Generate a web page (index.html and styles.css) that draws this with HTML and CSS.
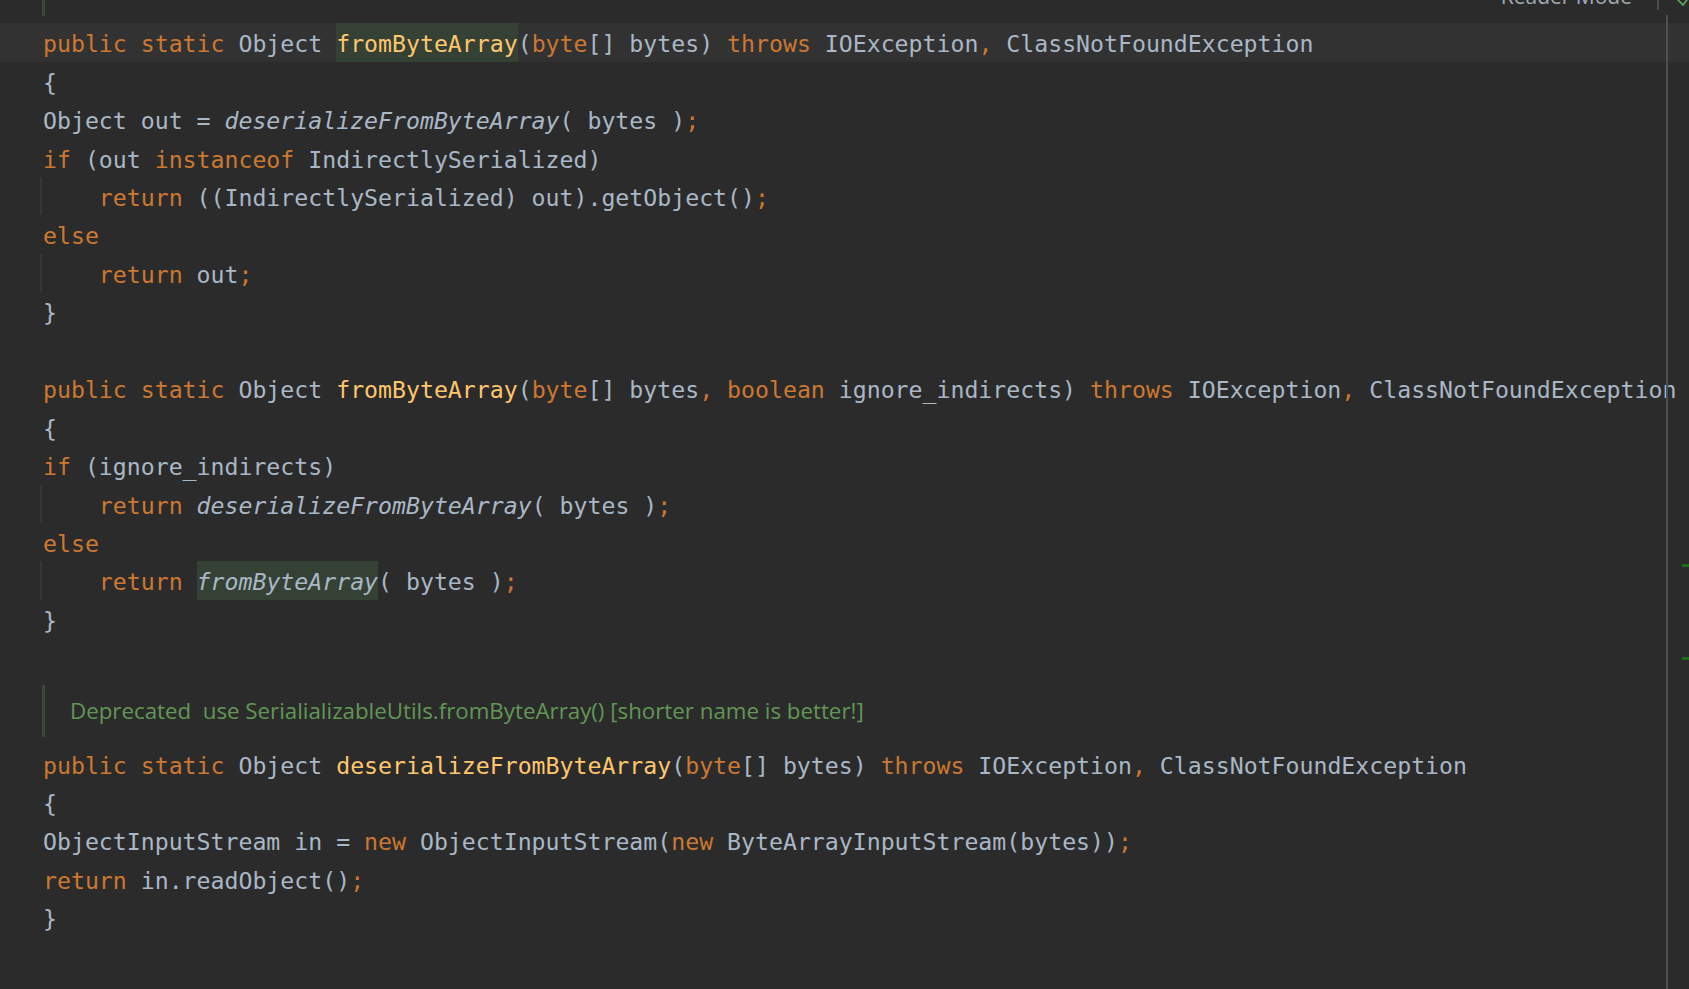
FILE: index.html
```html
<!DOCTYPE html>
<html lang="en">
<head>
<meta charset="utf-8">
<title>Editor</title>
<link rel="stylesheet" href="styles.css">
</head>
<body>
<div class="editor">
  <div class="doc doc-top"><span class="doc-text">Synonym for deserializeFromByteArray, kept only for legacy callers; ignoring wrapping</span></div>

  <div class="code">
    <div class="line current"><span class="k">public static</span> Object <span class="hl f">fromByteArray</span>(<span class="k">byte</span>[] bytes) <span class="k">throws</span> IOException<span class="k">,</span> ClassNotFoundException</div>
    <div class="line">{</div>
    <div class="line">Object out = <span class="i">deserializeFromByteArray</span>( bytes )<span class="k">;</span></div>
    <div class="line"><span class="k">if</span> (out <span class="k">instanceof</span> IndirectlySerialized)</div>
    <div class="line ind"><span class="guide">    <span class="k">return</span> ((IndirectlySerialized) out).getObject()<span class="k">;</span></span></div>
    <div class="line"><span class="k">else</span></div>
    <div class="line ind"><span class="guide">    <span class="k">return</span> out<span class="k">;</span></span></div>
    <div class="line">}</div>
    <div class="line"></div>
    <div class="line"><span class="k">public static</span> Object <span class="f">fromByteArray</span>(<span class="k">byte</span>[] bytes<span class="k">, boolean</span> ignore_indirects) <span class="k">throws</span> IOException<span class="k">,</span> ClassNotFoundException</div>
    <div class="line">{</div>
    <div class="line"><span class="k">if</span> (ignore_indirects)</div>
    <div class="line ind"><span class="guide">    <span class="k">return</span> <span class="i">deserializeFromByteArray</span>( bytes )<span class="k">;</span></span></div>
    <div class="line"><span class="k">else</span></div>
    <div class="line ind"><span class="guide">    <span class="k">return</span> <span class="hl i">fromByteArray</span>( bytes )<span class="k">;</span></span></div>
    <div class="line">}</div>
  </div>

  <div class="doc doc-mid"><span class="doc-text">Deprecated  use SerialializableUtils.fromByteArray() [shorter name is better!]</span></div>

  <div class="code">
    <div class="line"><span class="k">public static</span> Object <span class="f">deserializeFromByteArray</span>(<span class="k">byte</span>[] bytes) <span class="k">throws</span> IOException<span class="k">,</span> ClassNotFoundException</div>
    <div class="line">{</div>
    <div class="line">ObjectInputStream in = <span class="k">new</span> ObjectInputStream(<span class="k">new</span> ByteArrayInputStream(bytes))<span class="k">;</span></div>
    <div class="line"><span class="k">return</span> in.readObject()<span class="k">;</span></div>
    <div class="line">}</div>
  </div>

  <div class="reader-mode">Reader Mode</div>
  <div class="toolbar-sep"></div>
  <svg class="check" width="20" height="20" viewBox="0 0 20 20"><polyline points="3.5,12.5 10,19 20,6" fill="none" stroke="#55a15a" stroke-width="1.8"/></svg>
  <div class="margin-guide"></div>
  <div class="scroll-mark mark-a"></div>
  <div class="scroll-mark mark-b"></div>
</div>
</body>
</html>
```

FILE: styles.css
```css
html, body {
  margin: 0;
  padding: 0;
  background: #2b2b2b;
  overflow: hidden;
}

.editor {
  position: relative;
  width: 1689px;
  height: 989px;
  overflow: hidden;
  background: #2b2b2b;
}

.code {
  display: flex;
  flex-direction: column;
  font-family: "DejaVu Sans Mono", monospace;
  font-size: 23.2px;
  color: #a9b7c6;
}

.line {
  height: 38.45px;
  line-height: 41.5px;
  padding-left: 43px;
  white-space: pre;
  flex: none;
}

.line.current {
  background: #323232;
}

.line.ind {
  padding-left: 40px;
}

.guide {
  display: inline-block;
  height: 38.45px;
  border-left: 2px solid #373737;
  padding-left: 1px;
  vertical-align: top;
  line-height: 41.5px;
}

.k { color: #cc7832; }
.f { color: #ffc66d; }
.i { font-style: italic; }

.hl {
  display: inline-block;
  height: 38.45px;
  background: #344134;
}

.doc {
  display: flex;
  align-items: center;
  height: 52px;
  margin-left: 42px;
  border-left: 3px solid #3d4a39;
  padding-left: 25px;
  font-family: "Open Sans", "Noto Sans", sans-serif;
  font-size: 22.3px;
  color: #629755;
  white-space: pre;
}

.doc-text {
  line-height: 52px;
}

.doc-top {
  margin-top: -36px;
  margin-bottom: 7.3px;
}

.doc-top .doc-text {
  line-height: 43px;
  align-self: flex-start;
}

.doc-mid {
  margin-top: 47.1px;
  margin-bottom: 7.2px;
}

.reader-mode {
  position: absolute;
  top: -14px;
  right: 57px;
  font-family: "Open Sans", "Noto Sans", sans-serif;
  font-size: 21px;
  line-height: 21px;
  color: #a1abb5;
}

.toolbar-sep {
  position: absolute;
  left: 1657px;
  top: 0;
  width: 2px;
  height: 10px;
  background: #4b4b4b;
}

.check {
  position: absolute;
  left: 1673px;
  top: -14px;
}

.margin-guide {
  position: absolute;
  left: 1666px;
  top: 15px;
  bottom: 0;
  width: 2px;
  background: #4f4f4f;
}

.scroll-mark {
  position: absolute;
  left: 1682px;
  width: 7px;
  height: 3px;
  background: #1b6d1d;
}

.mark-a { top: 564px; }
.mark-b { top: 657px; }
```
